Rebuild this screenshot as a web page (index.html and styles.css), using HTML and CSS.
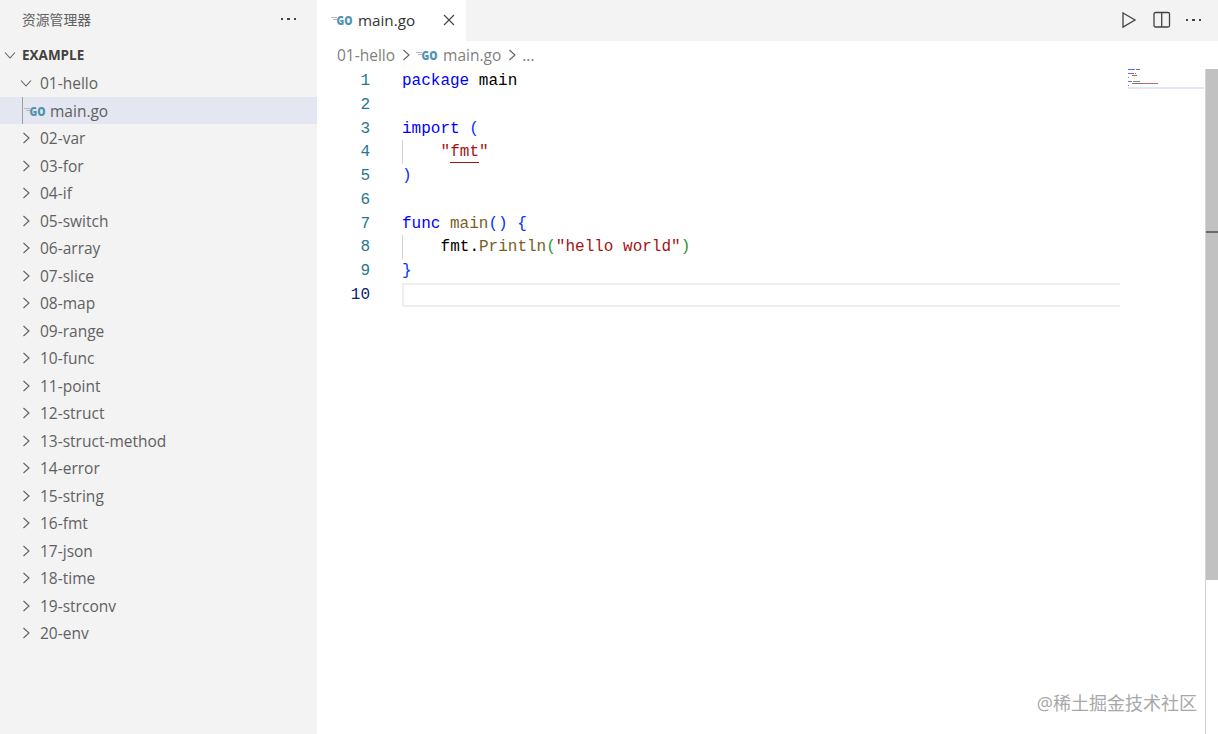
FILE: index.html
```html
<!DOCTYPE html>
<html lang="en">
<head>
	<meta charset="UTF-8">
	<title>main.go - example</title>
	<link rel="stylesheet" href="styles.css">
</head>
<body>
	<svg class="defs" width="0" height="0">
		<symbol id="right" viewBox="0 0 12 12">
			<path d="M3.5 1l5.5 5-5.5 5" stroke="#616161" stroke-width="1.1" fill="none"/>
		</symbol>
		<symbol id="down" viewBox="0 0 12 12">
			<path d="M1 3.5l5 5.500 5-5.500" stroke="#616161" stroke-width="1.1" fill="none"/>
		</symbol>
	</svg>
	<div class="app">
		<div class="sidebar">
			<div class="side-head">
				<span class="side-title">资源管理器</span>
				<span class="dots"><i></i><i></i><i></i></span>
			</div>
			<div class="row root"><svg class="chev"><use href="#down"/></svg><span>EXAMPLE</span></div>
			<div class="row folder"><svg class="chev"><use href="#down"/></svg><span>01-hello</span></div>
			<div class="row file"><span class="guide"></span><svg class="go" viewBox="0 -4 30 20"><path d="M0 3.500h6M2 5.500h4" stroke="#a9bcc6" fill="none"/><text x="5.500" y="10.500" class="go-text" textLength="16" lengthAdjust="spacingAndGlyphs">GO</text></svg><span>main.go</span></div>
			<div class="row folder"><svg class="chev"><use href="#right"/></svg><span>02-var</span></div>
			<div class="row folder"><svg class="chev"><use href="#right"/></svg><span>03-for</span></div>
			<div class="row folder"><svg class="chev"><use href="#right"/></svg><span>04-if</span></div>
			<div class="row folder"><svg class="chev"><use href="#right"/></svg><span>05-switch</span></div>
			<div class="row folder"><svg class="chev"><use href="#right"/></svg><span>06-array</span></div>
			<div class="row folder"><svg class="chev"><use href="#right"/></svg><span>07-slice</span></div>
			<div class="row folder"><svg class="chev"><use href="#right"/></svg><span>08-map</span></div>
			<div class="row folder"><svg class="chev"><use href="#right"/></svg><span>09-range</span></div>
			<div class="row folder"><svg class="chev"><use href="#right"/></svg><span>10-func</span></div>
			<div class="row folder"><svg class="chev"><use href="#right"/></svg><span>11-point</span></div>
			<div class="row folder"><svg class="chev"><use href="#right"/></svg><span>12-struct</span></div>
			<div class="row folder"><svg class="chev"><use href="#right"/></svg><span>13-struct-method</span></div>
			<div class="row folder"><svg class="chev"><use href="#right"/></svg><span>14-error</span></div>
			<div class="row folder"><svg class="chev"><use href="#right"/></svg><span>15-string</span></div>
			<div class="row folder"><svg class="chev"><use href="#right"/></svg><span>16-fmt</span></div>
			<div class="row folder"><svg class="chev"><use href="#right"/></svg><span>17-json</span></div>
			<div class="row folder"><svg class="chev"><use href="#right"/></svg><span>18-time</span></div>
			<div class="row folder"><svg class="chev"><use href="#right"/></svg><span>19-strconv</span></div>
			<div class="row folder"><svg class="chev"><use href="#right"/></svg><span>20-env</span></div>
		</div>
		<div class="main">
			<div class="tabbar">
				<div class="tab">
					<svg class="go" viewBox="0 -4 30 20"><path d="M0 3.500h6M2 5.500h4" stroke="#a9bcc6" fill="none"/><text x="5.500" y="10.500" class="go-text" textLength="16" lengthAdjust="spacingAndGlyphs">GO</text></svg>
					<span class="tab-name">main.go</span>
					<svg class="close" viewBox="0 0 12 12"><path d="M1 1l10 10M11 1L1 11" stroke="#424242" stroke-width="1.1" fill="none"/></svg>
				</div>
				<div class="actions">
					<svg class="act" viewBox="0 0 16 18"><path d="M2 2l12 7-12 7z" stroke="#424242" stroke-width="1.3" fill="none"/></svg>
					<svg class="act" viewBox="0 0 18 18"><rect x="1" y="1.500" width="15.500" height="14.500" rx="1.500" stroke="#424242" stroke-width="1.300" fill="none"/><path d="M8.700 1.500V16" stroke="#424242" stroke-width="1.300"/></svg>
					<span class="dots"><i></i><i></i><i></i></span>
				</div>
			</div>
			<div class="crumbs">
				<span>01-hello</span>
				<svg class="sep"><use href="#right"/></svg>
				<svg class="go" viewBox="0 -4 30 20"><path d="M0 3.500h6M2 5.500h4" stroke="#a9bcc6" fill="none"/><text x="5.500" y="10.500" class="go-text" textLength="16" lengthAdjust="spacingAndGlyphs">GO</text></svg>
				<span>main.go</span>
				<svg class="sep"><use href="#right"/></svg>
				<span>...</span>
			</div>
			<div class="editor">
				<div class="code">
					<div class="line"><span class="num">1</span><span class="txt"><span class="kw">package</span> main</span></div>
					<div class="line"><span class="num">2</span><span class="txt"></span></div>
					<div class="line"><span class="num">3</span><span class="txt"><span class="kw">import</span> <span class="br">(</span></span></div>
					<div class="line"><span class="num">4</span><span class="txt indent"><span class="str">"<span class="squiggle">fmt</span>"</span></span></div>
					<div class="line"><span class="num">5</span><span class="txt"><span class="br">)</span></span></div>
					<div class="line"><span class="num">6</span><span class="txt"></span></div>
					<div class="line"><span class="num">7</span><span class="txt"><span class="kw">func</span> <span class="fn">main</span><span class="br">()</span> <span class="br">{</span></span></div>
					<div class="line"><span class="num">8</span><span class="txt indent">fmt.<span class="fn">Println</span><span class="br2">(</span><span class="str">"hello world"</span><span class="br2">)</span></span></div>
					<div class="line"><span class="num">9</span><span class="txt"><span class="br">}</span></span></div>
					<div class="line"><span class="num active">10</span><span class="txt current"></span></div>
				</div>
				<div class="minimap">
					<svg width="85" height="24" viewBox="0 0 85 24">
						<rect x="8" y="0" width="7" height="1" fill="#6c6cd0"/><rect x="16" y="0" width="4" height="1" fill="#777"/>
						<rect x="8" y="4" width="6" height="1" fill="#6c6cd0"/><rect x="15" y="4" width="1" height="1" fill="#78a"/>
						<rect x="12" y="6" width="5" height="1" fill="#c55"/>
						<rect x="8" y="8" width="1" height="1" fill="#78a"/>
						<rect x="8" y="12" width="4" height="1" fill="#6c6cd0"/><rect x="13" y="12" width="7" height="1" fill="#887"/>
						<rect x="12" y="14" width="10" height="1" fill="#776"/><rect x="22" y="14" width="16" height="1" fill="#c66"/>
						<rect x="8" y="16" width="1" height="1" fill="#78a"/>
						<rect x="8" y="18" width="76" height="2" fill="#e4e6f1"/>
					</svg>
				</div>
				<div class="scroll">
					<div class="thumb"><span class="mark"></span></div>
				</div>
			</div>
		</div>
	</div>
	<div class="watermark">@稀土掘金技术社区</div>
</body>
</html>
```

FILE: styles.css
```css
*{
	margin: 0;
	padding: 0;
	box-sizing: border-box;
}
body{
	width: 1218px;
	height: 734px;
	overflow: hidden;
	background: #fff;
	font-family: "Open Sans", "Noto Sans CJK SC", sans-serif;
	color: #616161;
}
.defs{
	display: block;
}
.go-text{
	font-family: "Open Sans", sans-serif;
	font-size: 12px;
	font-weight: 800;
	fill: #4f93ae;
}
.app{
	display: flex;
	height: 734px;
}

/* sidebar */
.sidebar{
	width: 317px;
	flex: none;
	background: #f3f3f3;
}
.side-head{
	display: flex;
	justify-content: space-between;
	align-items: center;
	height: 41.75px;
	padding: 0 21px 3px 22px;
}
.side-title{
	font-size: 13.8px;
}
.dots{
	display: flex;
	gap: 4px;
}
.dots i{
	width: 2.5px;
	height: 2px;
	background: #424242;
}
.row{
	display: flex;
	align-items: center;
	height: 27.5px;
	font-size: 15.5px;
	white-space: nowrap;
}
.chev{
	width: 12px;
	height: 12px;
	flex: none;
}
.root{
	padding: 0 0 1px 4px;
	gap: 6px;
	font-size: 13.5px;
	font-weight: 700;
	color: #424242;
}
.folder{
	padding-left: 20px;
	gap: 8px;
}
.file{
	background: #e4e6f1;
	padding-left: 22px;
}
.guide{
	width: 1px;
	height: 100%;
	background: #a0a0a0;
	flex: none;
	margin-right: 1px;
}
.go{
	width: 30px;
	height: 20px;
	flex: none;
	margin-right: -8px;
}
.file .go{
	margin-right: -4px;
}

/* tabs */
.main{
	flex: 1;
	display: flex;
	flex-direction: column;
	min-width: 0;
}
.tabbar{
	display: flex;
	justify-content: space-between;
	height: 41px;
	flex: none;
	background: #f3f3f3;
}
.tab{
	display: flex;
	align-items: center;
	width: 149px;
	padding: 0 0 2px 14px;
	background: #fff;
}
.tab-name{
	font-size: 15.2px;
	color: #333;
	margin-left: 5px;
}
.close{
	width: 12px;
	height: 12px;
	margin-left: 28px;
}
.actions{
	display: flex;
	align-items: center;
	gap: 15px;
	padding: 0 17px 2px 0;
}
.act{
	width: 18px;
	height: 18px;
}

/* breadcrumbs */
.crumbs{
	display: flex;
	align-items: center;
	height: 28px;
	flex: none;
	padding-left: 20px;
	font-size: 15.5px;
	color: #7f7f7f;
}
.sep{
	width: 12px;
	height: 12px;
	margin: 0 4px 0 5px;
}
.crumbs .go{
	margin-right: -3px;
}

/* code */
.editor{
	display: flex;
	flex: 1;
	min-height: 0;
}
.code{
	width: 803px;
	flex: none;
	font-family: "Liberation Mono", monospace;
	font-size: 16px;
	color: #000;
}
.line{
	display: flex;
	height: 23.75px;
	line-height: 25.75px;
	white-space: pre;
}
.num{
	width: 53px;
	flex: none;
	text-align: right;
	color: #237893;
}
.num.active{
	color: #0b216f;
}
.txt{
	flex: 1;
	margin-left: 32px;
}
.indent{
	padding-left: 37.6px;
	border-left: 1px solid #d3d3d3;
}
.current{
	border: 2px solid #eeeeee;
	border-right: 0;
}
.kw{
	color: #0000ff;
}
.br{
	color: #0431fa;
}
.br2{
	color: #319331;
}
.fn{
	color: #795e26;
}
.str{
	color: #a31515;
}
.squiggle{
	border-bottom: 1px solid #a31515;
	padding-bottom: 1px;
}

/* minimap and scrollbar */
.minimap{
	width: 85px;
	flex: none;
}
.minimap svg{
	display: block;
}
.scroll{
	flex: 1;
	border-left: 1px solid #d4d4d4;
}
.thumb{
	height: 511px;
	padding-top: 162px;
	background: #c1c1c1;
}
.mark{
	display: block;
	height: 2px;
	background: #6a6a6a;
}
.watermark{
	position: absolute;
	right: 21px;
	top: 691px;
	font-size: 18px;
	line-height: 24px;
	color: #a8a8a8;
}
```
